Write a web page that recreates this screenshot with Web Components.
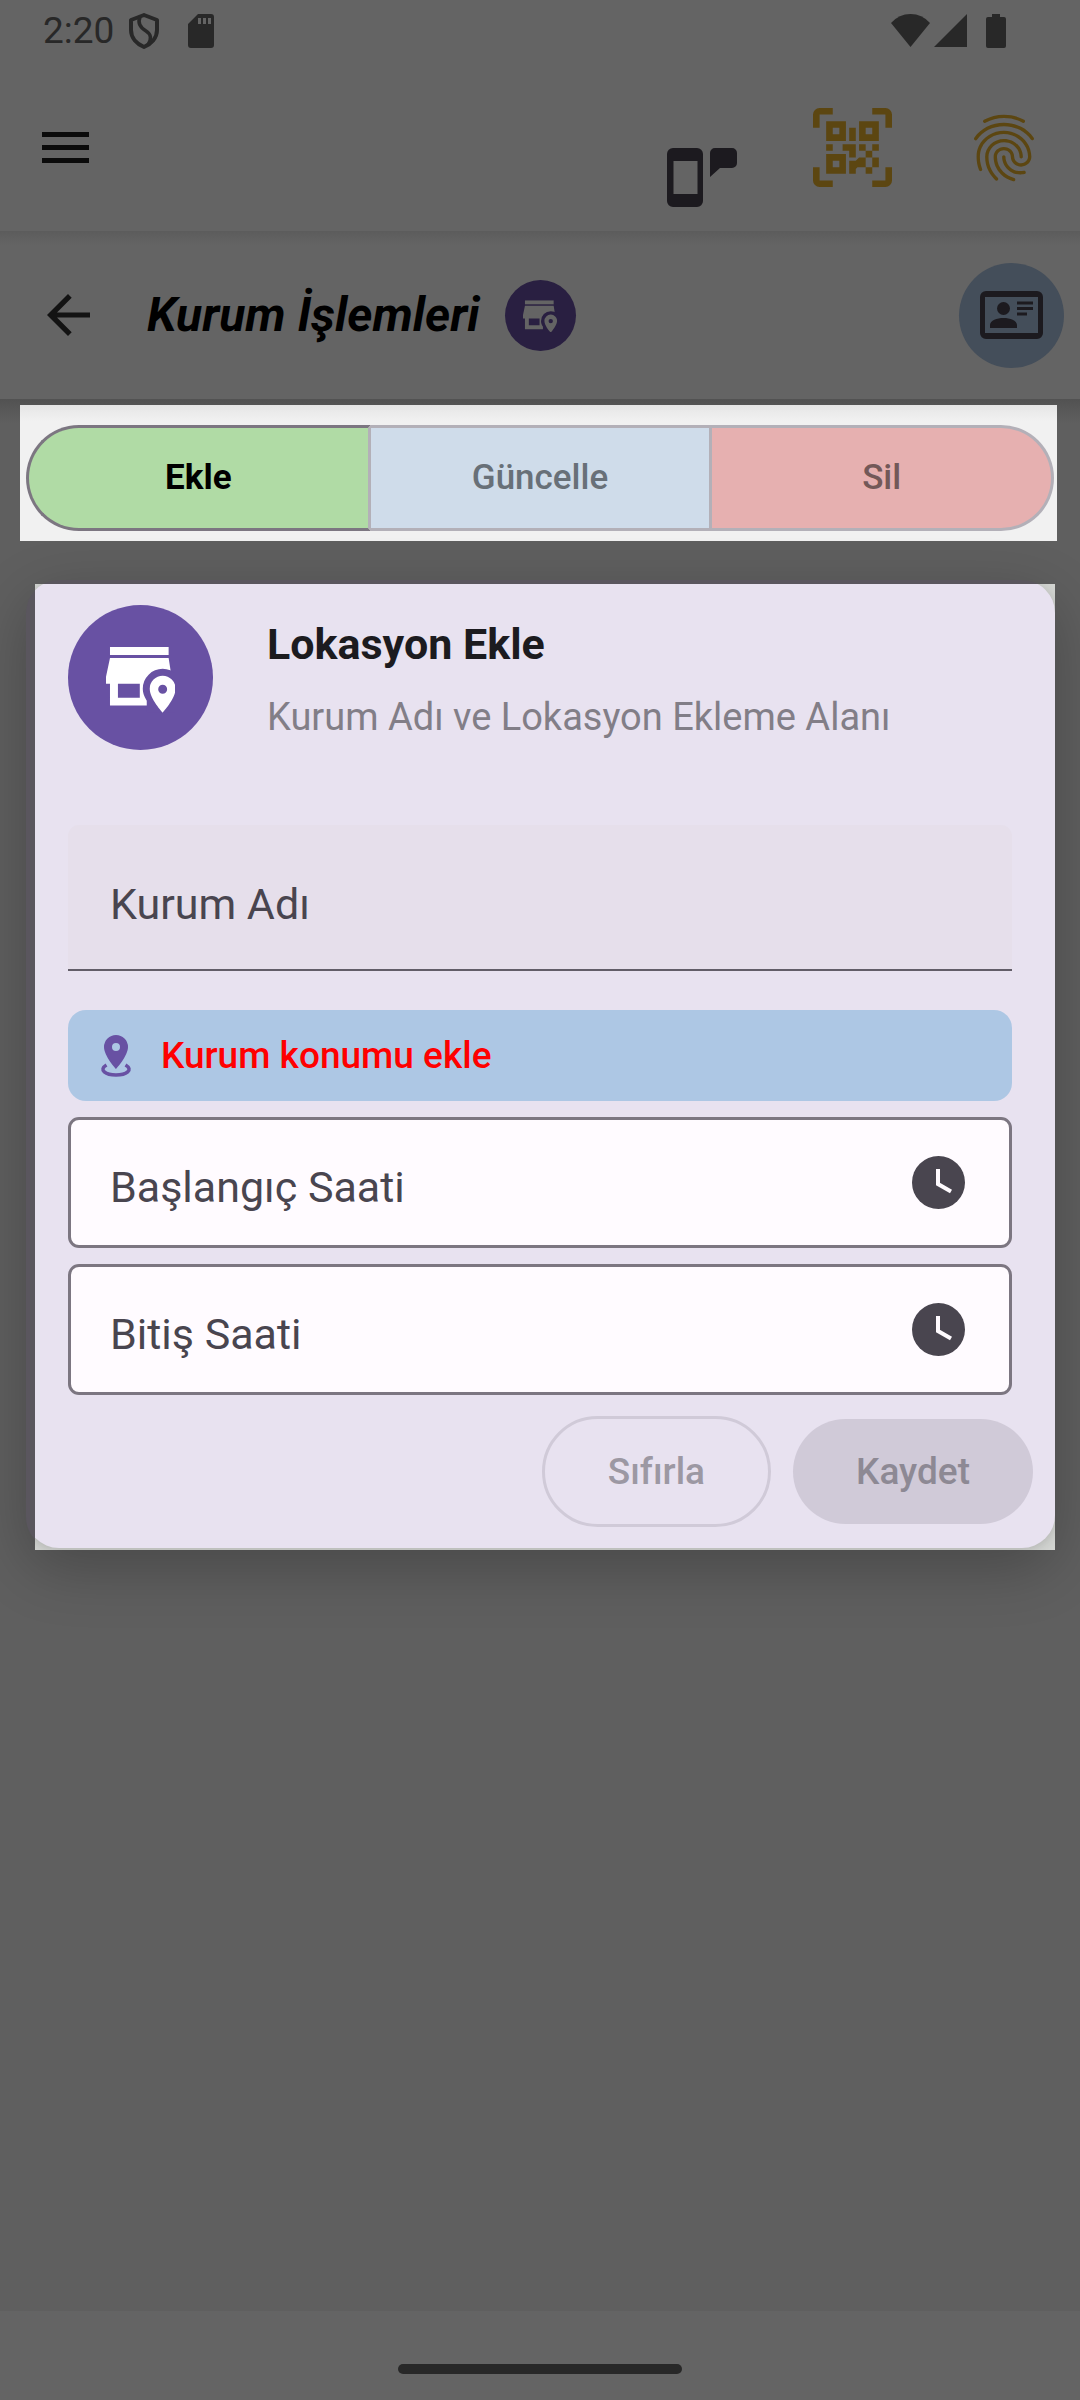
<!DOCTYPE html>
<html lang="tr">
<head>
<meta charset="utf-8">
<meta name="viewport" content="width=device-width, initial-scale=1">
<title>Kurum İşlemleri</title>
<style>
  html, body { margin: 0; }
  body { background: #5f5f5f; font-family: Roboto, "Noto Sans", sans-serif; font-size: 38px; line-height: 48px; }
</style>
</head>
<body>
<kurum-app></kurum-app>
<script>
const RESET = `
  *, *::before, *::after { box-sizing: border-box; }
  button { font: inherit; color: inherit; border: 0; margin: 0; padding: 0; background: none; }
  svg { display: block; flex: none; }
`;
function define(name, css, html) {
  const template = document.createElement('template');
  template.innerHTML = `<style>${RESET}${css}</style>${html}`;
  customElements.define(name, class extends HTMLElement {
    constructor() {
      super();
      this.attachShadow({ mode: 'open' }).append(template.content.cloneNode(true));
    }
  });
}

define('store-badge', `
  :host { display: flex; align-items: center; justify-content: center; border-radius: 50%;
    width: var(--badge-size); height: var(--badge-size); background: var(--badge-bg); color: var(--badge-fg); flex: none; }
  svg { width: 48%; height: auto; }
`, `
  <svg viewBox="0 -5 70 71" fill="currentColor" aria-hidden="true">
    <path d="M4 0H63V8H4z"/>
    <path fill-rule="evenodd" d="M4 11H63L65 24 65 36H63V59H4V37H0V30zM12 37V51H34V37z"/>
    <path style="fill:var(--badge-bg)" d="M57 22a20 20 0 0 1 20 20V66H41V54C38 49 37 46 37 42A20 20 0 0 1 57 22z"/>
    <path fill-rule="evenodd" d="M57 29a13 13 0 0 1 13 13C70 52 57 66 57 66S44 52 44 42A13 13 0 0 1 57 29zM57 38a4.500 4.500 0 1 0 0 9a4.500 4.500 0 1 0 0-9z"/>
  </svg>
`);

define('status-bar', `
  :host { display: flex; align-items: center; justify-content: space-between; height: 64px; padding: 0 74px 2px 43px; color: #282828; font-size: 37px; }
  div { display: flex; align-items: center; }
  .left { gap: 15px; }
  .sd { margin-left: 14px; }
  .right { gap: 4px; }
  .battery { margin-left: 15px; }
`, `
  <div class="left">
    <time>2:20</time>
    <svg width="30" height="36" viewBox="0 0 30 36" fill="none" stroke="currentColor" stroke-width="4" stroke-linejoin="round">
      <path d="M15 2 28 7V17C28 25 22 31 15 34C8 31 2 25 2 17V7z"/>
      <path stroke-width="3.500" d="M11 4C8 11 12 15 17 18C22 21 23 26 19 32"/>
    </svg>
    <svg class="sd" width="26" height="34" viewBox="0 0 26 34" fill="currentColor">
      <path fill-rule="evenodd" d="M10 0H23a3 3 0 0 1 3 3V31a3 3 0 0 1-3 3H3a3 3 0 0 1-3-3V10zM10 4V10H13V4zM15 4V10H18V4zM20 4V10H23V4z"/>
    </svg>
  </div>
  <div class="right">
    <svg width="39" height="34" viewBox="0 0 39 34" fill="currentColor"><path d="M0 9Q8 0 19.500 0T39 9L19.500 33z"/></svg>
    <svg width="33" height="34" viewBox="0 0 33 34" fill="currentColor"><path d="M33 0V33H0z"/></svg>
    <svg class="battery" width="20" height="34" viewBox="0 0 20 34" fill="currentColor"><path d="M6 0H14V3H18a2 2 0 0 1 2 2V32a2 2 0 0 1-2 2H2a2 2 0 0 1-2-2V5a2 2 0 0 1 2-2H6z"/></svg>
  </div>
`);

define('app-toolbar', `
  :host { display: flex; align-items: center; justify-content: space-between; height: 167px; padding: 0 36px 0 42px; }
  nav { display: flex; align-items: center; align-self: stretch; }
  .phone { align-self: flex-end; padding-bottom: 23px; margin-right: 76px; color: #1c1a1f; }
  .gold { color: #5c4611; }
  .qr { margin-right: 72px; }
`, `
  <button aria-label="Menü">
    <svg width="47" height="32" viewBox="0 0 47 32" fill="#0b0b0b"><path d="M0 0H47V5H0zM0 13H47V18H0zM0 26H47V31H0z"/></svg>
  </button>
  <nav>
    <button class="phone" aria-label="Cihaz mesajı">
      <svg width="70" height="60" viewBox="0 0 70 60" fill="currentColor">
        <path fill-rule="evenodd" d="M6 0H30a6 6 0 0 1 6 6V53a6 6 0 0 1-6 6H6a6 6 0 0 1-6-6V6a6 6 0 0 1 6-6zM6.500 13V46H30.500V13z"/>
        <path d="M48 0H65a5 5 0 0 1 5 5V15a5 5 0 0 1-5 5H53L43 29V5a5 5 0 0 1 5-5z"/>
      </svg>
    </button>
    <button class="gold qr" aria-label="Karekod">
      <svg width="79" height="79" viewBox="0 0 24 24" fill="currentColor">
        <path d="M6 0H2A2 2 0 0 0 0 2V6H2V2H6zM18 0H22A2 2 0 0 1 24 2V6H22V2H18zM6 24H2A2 2 0 0 1 0 22V18H2V22H6zM18 24H22A2 2 0 0 0 24 22V18H22V22H18z"/>
        <path fill-rule="evenodd" d="M4 4H10V10H4zM6 6V8H8V6zM14 4H20V10H14zM16 6V8H18V6zM4 14H10V20H4zM6 16V18H8V16z"/>
        <path d="M11 6H13V10H11zM4 11H6V13H4zM9 11H13V15H11V13H9zM14 11H16V13H14zM18 11H20V13H18zM16 13H18V15H16zM14 15H16V18H13.500L13 18.500V20H11V16H13zM18 15H20V18H18zM16 18H18V20H16z"/>
      </svg>
    </button>
    <button class="gold" aria-label="Parmak izi">
      <svg width="80" height="80" viewBox="0 0 24 24" fill="currentColor"><path d="M17.810 4.470c-.08 0-.16-.02-.23-.06C15.660 3.420 14 3 12.010 3c-1.980 0-3.860.47-5.570 1.410-.24.13-.54.04-.68-.2-.13-.24-.04-.55.2-.68C7.820 2.520 9.860 2 12.010 2c2.130 0 3.990.47 6.030 1.520.25.13.34.43.21.67-.09.18-.26.28-.44.28zM3.500 9.720c-.1 0-.2-.03-.29-.09-.23-.16-.28-.47-.12-.7.99-1.400 2.250-2.500 3.750-3.270C9.980 4.040 14 4.030 17.150 5.650c1.500.77 2.760 1.860 3.750 3.250.16.22.11.54-.12.7-.23.16-.54.11-.7-.12-.9-1.260-2.040-2.250-3.390-2.940-2.870-1.470-6.540-1.470-9.400.01-1.360.7-2.500 1.700-3.400 2.960-.08.14-.23.21-.39.21zm6.250 12.070c-.13 0-.26-.05-.35-.15-.87-.87-1.340-1.430-2.010-2.640-.69-1.230-1.050-2.730-1.050-4.340 0-2.970 2.540-5.390 5.660-5.390s5.660 2.420 5.660 5.390c0 .28-.22.5-.5.5s-.5-.22-.5-.5c0-2.420-2.090-4.390-4.660-4.390-2.570 0-4.660 1.970-4.660 4.390 0 1.440.32 2.770.93 3.850.64 1.150 1.080 1.640 1.850 2.420.19.2.19.51 0 .71-.11.1-.24.15-.37.15zm7.170-1.850c-1.190 0-2.240-.3-3.100-.89-1.490-1.010-2.380-2.650-2.380-4.390 0-.28.22-.5.5-.5s.5.22.5.5c0 1.410.72 2.740 1.940 3.560.71.48 1.540.71 2.540.71.24 0 .64-.03 1.040-.1.27-.05.53.13.58.41.05.27-.13.53-.41.58-.57.11-1.070.12-1.210.12zM14.910 22c-.04 0-.09-.01-.13-.02-1.590-.44-2.630-1.030-3.720-2.100-1.400-1.390-2.170-3.240-2.170-5.220 0-1.620 1.380-2.940 3.080-2.940 1.700 0 3.080 1.320 3.080 2.940 0 1.070.93 1.940 2.080 1.940s2.080-.87 2.080-1.940c0-3.770-3.250-6.830-7.250-6.830-2.840 0-5.440 1.580-6.610 4.030-.39.81-.59 1.760-.59 2.800 0 .78.07 2.010.67 3.610.1.26-.03.55-.29.64-.26.1-.55-.04-.64-.29-.49-1.310-.73-2.610-.73-3.960 0-1.200.23-2.290.68-3.240 1.330-2.790 4.280-4.600 7.510-4.600 4.550 0 8.250 3.510 8.250 7.830 0 1.620-1.380 2.940-3.080 2.940s-3.080-1.320-3.080-2.940c0-1.070-.93-1.940-2.080-1.940s-2.080.87-2.080 1.940c0 1.710.66 3.310 1.870 4.510.95.94 1.860 1.460 3.270 1.850.27.07.42.35.35.61-.05.23-.26.38-.47.38z"/></svg>
    </button>
  </nav>
`);

define('page-header', `
  :host { display: flex; align-items: center; height: 168px; padding: 0 16px 0 47px; }
  h1 { margin: 0 25px 0 57px; font-size: 48px; line-height: 56px; font-weight: 700; font-style: italic; color: #000; }
  store-badge { --badge-size: 71px; --badge-bg: #291f41; --badge-fg: #646464; }
  .id { margin-left: auto; width: 105px; height: 105px; border-radius: 50%; background: #444e5a; color: #1c1a1f;
    display: flex; align-items: center; justify-content: center; }
`, `
  <button aria-label="Geri">
    <svg width="43" height="42" viewBox="0 0 43 42" fill="#131313"><path d="M43 18.500H10L24.700 3.700 21 0 0 21 21 42 24.700 38.300 10 23.500H43z"/></svg>
  </button>
  <h1><slot></slot></h1>
  <store-badge></store-badge>
  <button class="id" aria-label="Kimlik kartı">
    <svg width="63" height="48" viewBox="0 0 63 48" fill="currentColor">
      <path fill-rule="evenodd" d="M6 0H57a6 6 0 0 1 6 6V42a6 6 0 0 1-6 6H6a6 6 0 0 1-6-6V6a6 6 0 0 1 6-6zM5 6V42H58V6z"/>
      <circle cx="23.500" cy="17.500" r="6.500"/>
      <path d="M10 37V34C10 29.500 17 27 23.500 27S37 29.500 37 34V37zM37 10.500H53V13.500H37zM37 16H53V19H37zM37 21.500H47V24.500H37z"/>
    </svg>
  </button>
`);

define('segment-bar', `
  :host { display: flex; margin: 6px 23px 0 20px; padding: 20px 3px 10px 6px; background: linear-gradient(#e6e6e6, #f1f1f1 16px); }
  button { flex: 1 1 0; height: 106px; border: 3px solid #b3b0b8; border-left-width: 0; color: #687078; font-weight: 500; font-size: 35px; }
  .add { flex-basis: 3px; border-color: #7c7681; border-left-width: 3px; border-right-color: #b3b0b8; border-radius: 53px 0 0 53px; background: #b0dba5; color: #000; font-weight: 700; }
  .edit { background: #cfdcea; }
  .del { border-radius: 0 53px 53px 0; background: #e6b0b0; color: #735858; }
`, `
  <button class="add" aria-pressed="true">Ekle</button>
  <button class="edit" aria-pressed="false">Güncelle</button>
  <button class="del" aria-pressed="false">Sil</button>
`);

define('text-field', `
  :host { display: flex; align-items: center; height: 146px; padding: 14px 44px 0 42px; font-size: 43px; color: #49454f;
    background: #e6dfeb; border-bottom: 2px solid #625d68; border-radius: 11px 11px 0 0; }
  :host([kind="time"]) { height: 131px; padding: 0 44px 0 39px; background: #fffbff; border: 3px solid #7c7681; border-radius: 11px; }
  label { flex: none; }
  :host([kind="time"]) label { padding-top: 8px; }
  input { flex: 1; min-width: 0; border: 0; padding: 0 0 0 16px; background: none; font: inherit; color: inherit; outline: 0; }
  button { display: none; }
  :host([kind="time"]) button { display: block; }
`, `
  <label for="value"><slot></slot></label>
  <input id="value" type="text">
  <button type="button" aria-label="Saat seç">
    <svg width="53" height="53" viewBox="0 0 53 53"><circle cx="26.500" cy="26.500" r="26.500" fill="#49454f"/><path d="M26 13V28L39 35.500" fill="none" stroke="#fffbff" stroke-width="4"/></svg>
  </button>
`);

define('location-card', `
  :host { display: block; margin: 39px 25px 0 26px; padding: 4px 0 0 9px; border-radius: 33px; background: #5a565e;
    box-shadow: 0 18px 60px rgba(0, 0, 0, .24); }
  .window { overflow: hidden; background: #d2d4d1; padding-bottom: 2px; }
  .card { margin: -4px 0 0 -9px; padding: 25px 22px 21px 42px; border-radius: 33px; background: #e8e2f0;
    box-shadow: 0 2px 12px rgba(0, 0, 0, .16); display: flex; flex-direction: column; }
  header { display: flex; gap: 54px; margin-bottom: 75px; }
  store-badge { --badge-size: 145px; --badge-bg: #6851a3; --badge-fg: #fff; }
  h2 { margin: 15px 0 25px; font-size: 43px; line-height: 48px; font-weight: 700; color: #1c1b1f; }
  p { margin: 0; color: #827e87; }
  form { display: flex; flex-direction: column; gap: 16px; padding-right: 21px; }
  .place { display: flex; align-items: center; gap: 29px; height: 91px; margin-top: 23px; padding: 0 32px; border-radius: 18px;
    background: #adc7e4; color: #f00; font-weight: 500; font-size: 37px; }
  footer { display: flex; justify-content: flex-end; align-items: center; gap: 22px; margin-top: 21px; font-weight: 500; font-size: 37px; }
  footer button { height: 105px; padding: 0 63px; border-radius: 56px; background: #d0cad8; color: #8d8994; }
  footer .reset { height: 111px; background: none; border: 3px solid #d0cad8; color: #9c98a3; }
`, `
  <div class="window"><section class="card">
    <header>
      <store-badge></store-badge>
      <div><h2>Lokasyon Ekle</h2><p>Kurum Adı ve Lokasyon Ekleme Alanı</p></div>
    </header>
    <form>
      <text-field>Kurum Adı</text-field>
      <button class="place" type="button">
        <svg width="32" height="42" viewBox="0 0 32 42" fill="#6851a3">
          <path fill-rule="evenodd" d="M16 0a12 12 0 0 1 12 12C28 21 16 34 16 34S4 21 4 12A12 12 0 0 1 16 0zM16 8a4 4 0 1 0 0 8a4 4 0 1 0 0-8z"/>
          <path d="M6.500 30C-2 35 6 40 16 40S34 35 25.500 30" fill="none" stroke="#6851a3" stroke-width="3.500"/>
        </svg>
        <span>Kurum konumu ekle</span>
      </button>
      <text-field kind="time">Başlangıç Saati</text-field>
      <text-field kind="time">Bitiş Saati</text-field>
    </form>
    <footer>
      <button class="reset" disabled>Sıfırla</button>
      <button disabled>Kaydet</button>
    </footer>
  </section></div>
`);

define('kurum-app', `
  :host { display: flex; flex-direction: column; min-height: 100vh; background: #5f5f5f; }
  .top { background: #646464; }
  page-header { background: linear-gradient(#5c5c5c, #646464 14px); }
  main { flex: 1; background: linear-gradient(#525252, #5f5f5f 24px); }
  .gesture { display: flex; justify-content: center; height: 89px; padding-top: 53px; background: #646464; }
  .gesture span { width: 284px; height: 10px; border-radius: 5px; background: #282828; }
`, `
  <div class="top"><status-bar></status-bar><app-toolbar></app-toolbar></div>
  <page-header>Kurum İşlemleri</page-header>
  <main>
    <segment-bar></segment-bar>
    <location-card></location-card>
  </main>
  <div class="gesture"><span></span></div>
`);
</script>
</body>
</html>
